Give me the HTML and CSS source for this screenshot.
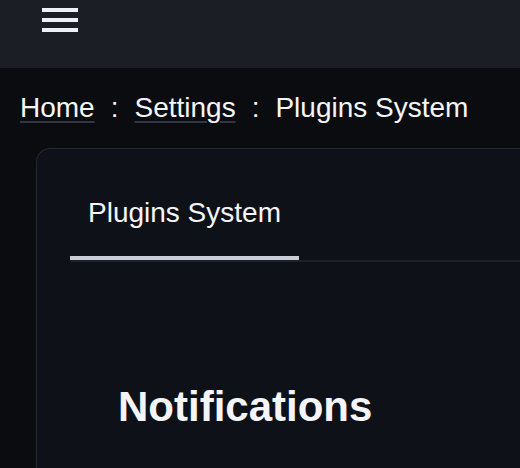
FILE: index.html
```html
<!DOCTYPE html>
<html lang="en">
<head>
<meta charset="utf-8">
<title>Plugins System</title>
<link rel="stylesheet" href="styles.css">
</head>
<body>
<header class="topbar">
  <button class="menu-btn" aria-label="Menu">
    <span class="bar"></span><span class="bar"></span><span class="bar"></span>
  </button>
</header>
<nav class="breadcrumb">
  <a class="crumb-link" href="#">Home</a>
  <span class="sep">:</span>
  <a class="crumb-link" href="#">Settings</a>
  <span class="sep">:</span>
  <span class="crumb-current">Plugins System</span>
</nav>
<main class="card">
  <div class="tablist">
    <div class="tab active">Plugins System</div>
  </div>
  <section class="panel">
    <h1 class="panel-title">Notifications</h1>
  </section>
</main>
</body>
</html>
```
FILE: styles.css
```css
html, body {
  margin: 0;
  padding: 0;
  width: 520px;
  height: 468px;
  overflow: hidden;
}
body {
  background: #0b0c0f;
  color: #f4f5f8;
  font-family: "Liberation Sans", Arial, sans-serif;
}
.topbar {
  height: 68px;
  background: #1b1e25;
  display: flex;
  align-items: flex-start;
  padding-left: 42px;
  box-sizing: border-box;
}
.menu-btn {
  background: none;
  border: 0;
  padding: 8px 0 0 0;
  display: flex;
  flex-direction: column;
  gap: 6px;
  cursor: pointer;
}
.bar {
  display: block;
  width: 36px;
  height: 4px;
  background: #eef0f7;
}
.breadcrumb {
  display: flex;
  align-items: baseline;
  padding: 24px 0 0 20px;
  height: 80px;
  box-sizing: border-box;
  font-size: 28px;
  line-height: 32px;
  white-space: nowrap;
}
.crumb-link {
  color: #f4f5f8;
  text-decoration: underline;
  text-decoration-color: #323644;
  text-decoration-thickness: 2px;
  text-underline-offset: 4px;
}
.sep {
  margin: 0 16px;
}
.crumb-current {
  color: #f4f5f8;
}
.card {
  display: block;
  margin-left: 36px;
  height: 320px;
  background: #0e1118;
  border: 1px solid #23272f;
  border-right: 0;
  border-bottom: 0;
  border-radius: 14px 0 0 0;
  padding: 24px 0 0 33px;
  box-sizing: border-box;
  overflow: hidden;
}
.tablist {
  display: flex;
  border-bottom: 2px solid #1d2129;
}
.tab {
  font-size: 28px;
  line-height: 32px;
  padding: 24px 18px 27px 18px;
  border-bottom: 4px solid #c9cdd6;
  white-space: nowrap;
}
.panel {
  padding: 121px 0 0 48px;
}
.panel-title {
  margin: 0;
  font-size: 42px;
  font-weight: 700;
  line-height: 48px;
}
```
